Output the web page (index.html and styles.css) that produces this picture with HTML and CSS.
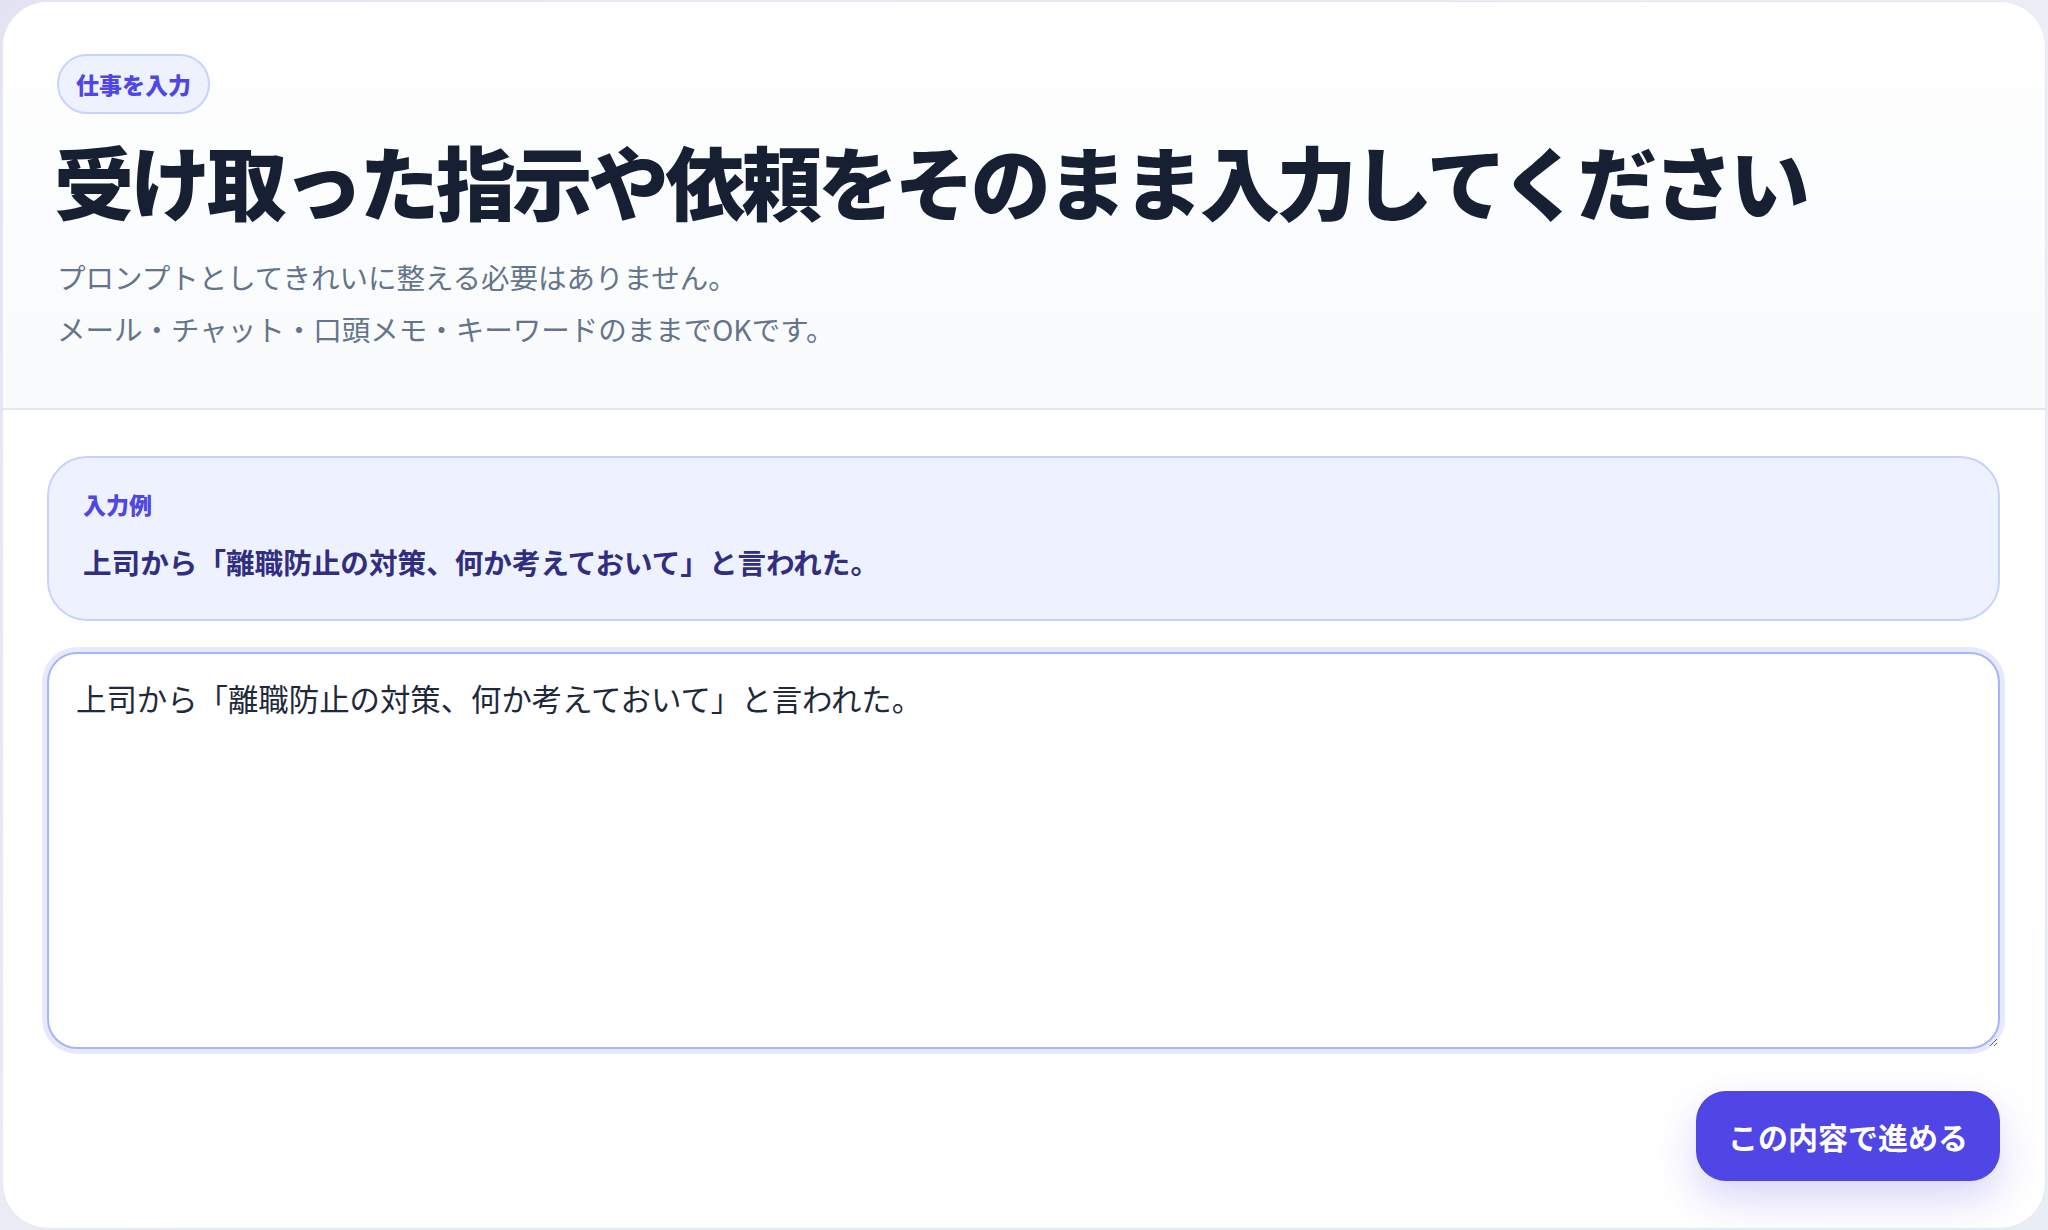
FILE: index.html
```html
<!DOCTYPE html>
<html lang="ja">
<head>
<meta charset="utf-8">
<title>仕事を入力</title>
<link rel="stylesheet" href="styles.css">
</head>
<body>
<div class="page">
  <section class="card">
    <header class="card-header">
      <span class="badge">仕事を入力</span>
      <h1 class="title">受け取った指示や依頼をそのまま入力してください</h1>
      <p class="lead">プロンプトとしてきれいに整える必要はありません。<br>メール・チャット・口頭メモ・キーワードのままでOKです。</p>
    </header>
    <div class="card-body">
      <div class="example">
        <div class="example-label">入力例</div>
        <div class="example-text">上司から「離職防止の対策、何か考えておいて」と言われた。</div>
      </div>
      <textarea id="task" class="task-input" autofocus>上司から「離職防止の対策、何か考えておいて」と言われた。</textarea>
      <div class="actions">
        <button class="primary-btn" type="button">この内容で進める</button>
      </div>
    </div>
  </section>
</div>
<script src="script.js"></script>
</body>
</html>
```

FILE: styles.css
```css
* { box-sizing: border-box; }
html, body { margin: 0; height: 100%; }
body {
  font-family: "Noto Sans CJK JP", "Noto Sans", sans-serif;
  background: linear-gradient(135deg, #e3e3f4 0%, #eceef6 50%, #e9edf4 100%);
}
.page {
  padding: 1px 2px 1px 2px;
  height: 1230px;
}
.card {
  height: 1228px;
  background: #ffffff;
  border: 1px solid #e2e8f0;
  border-radius: 46px;
  overflow: hidden;
  display: flex;
  flex-direction: column;
}
.card-header {
  padding: 52px 54px 53px;
  background: linear-gradient(180deg, #ffffff 0%, #f8fafc 100%);
  border-bottom: 2px solid #e2e8f0;
  display: flex;
  flex-direction: column;
  align-items: flex-start;
}
.badge {
  display: inline-flex;
  align-items: center;
  height: 60px;
  padding: 0 17px;
  border: 2px solid #c7d2fe;
  background: #eef2ff;
  border-radius: 999px;
  color: #4f46e5;
  font-size: 23px;
  font-weight: 900;
}
.title {
  margin: 17px 0 0 -3px;
  font-size: 80px;
  line-height: 96px;
  font-weight: 900;
  letter-spacing: -0.045em;
  color: #172033;
}
.lead {
  margin: 24px 0 0;
  font-size: 28.5px;
  line-height: 52px;
  color: #64748b;
}
.card-body {
  padding: 46px 45px 46px 44px;
  display: flex;
  flex-direction: column;
}
.example {
  height: 165px;
  border: 2px solid #c7d2fe;
  background: #eef2ff;
  border-radius: 40px;
  padding: 30px 34px 0;
}
.example-label {
  font-size: 23px;
  line-height: 32px;
  font-weight: 900;
  color: #4f46e5;
}
.example-text {
  margin-top: 22px;
  font-size: 28.6px;
  line-height: 40px;
  font-weight: 700;
  color: #312e81;
}
.task-input {
  display: block;
  margin-top: 31px;
  width: 100%;
  height: 397px;
  border: 2px solid #a5b4fc;
  border-radius: 30px;
  box-shadow: 0 0 0 5px #e7e9fd;
  padding: 20px 27px;
  font-family: "Noto Sans CJK JP", "Noto Sans", sans-serif;
  font-size: 30.4px;
  line-height: 48px;
  color: #1e293b;
  background: #ffffff;
  outline: none;
  resize: vertical;
  caret-color: #1e293b;
}
.actions {
  margin-top: 42px;
  display: flex;
  justify-content: flex-end;
}
.primary-btn {
  height: 90px;
  padding: 0 32px;
  border: none;
  border-radius: 30px;
  background: #4f46e5;
  color: #ffffff;
  font-family: "Noto Sans CJK JP", "Noto Sans", sans-serif;
  font-size: 30px;
  font-weight: 700;
  box-shadow: 0 18px 40px rgba(79, 70, 229, 0.22);
  cursor: pointer;
}
```

FILE: script.js
```js
var t = document.getElementById('task');
t.focus();
t.setSelectionRange(t.value.length, t.value.length);
```
